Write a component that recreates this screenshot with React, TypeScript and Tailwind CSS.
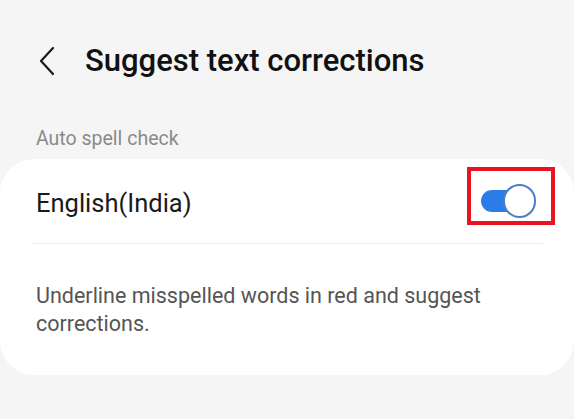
const App = () => {
  return (
    <div
      className="w-[574px] h-[419px] bg-[#f5f5f5] overflow-hidden"
      style={{ fontFamily: "Roboto, 'Noto Sans', sans-serif" }}
    >
      {/* header */}
      <div className="flex items-center h-[62px] mt-[30px] pl-[38px]">
        <svg width="18" height="30" viewBox="0 0 18 30" fill="none">
          <path d="M15 2 L3 15 L15 28" stroke="#1a1a1a" strokeWidth="2.2" strokeLinecap="round" strokeLinejoin="round" />
        </svg>
        <h1 className="ml-[29px] text-[31px] font-medium text-[#111]">
          Suggest text corrections
        </h1>
      </div>

      <div className="pl-[36px] mt-[36px] text-[19.5px] leading-[22px] text-[#8a8a8a]">
        Auto spell check
      </div>

      {/* card */}
      <div className="mt-[9px] bg-white rounded-[34px] h-[216px]">
        <div className="flex items-center justify-between h-[84px] pl-[36px] pr-[38px]">
          <span className="text-[25.5px] text-[#1a1a1a] pt-[4px]">English(India)</span>
          <div className="relative">
            <div className="relative w-[55px] h-[34px] flex items-center">
              <div className="w-[44px] h-[22px] rounded-full bg-[#2a7ce8]" />
              <div className="absolute right-0 top-0 w-[33px] h-[34px] rounded-full bg-white border-2 border-[#4a80c4]" />
            </div>
            <div className="absolute -left-[14px] -top-[17px] w-[88px] h-[58px] border-[4px] border-[#e8141f]" />
          </div>
        </div>
        <div className="mx-[31px] h-px bg-[#ececec]" />
        <p className="px-[36px] pt-[38px] text-[21.5px] leading-[28px] text-[#555]">
          Underline misspelled words in red and suggest corrections.
        </p>
      </div>
    </div>
  );
};

export default App;
